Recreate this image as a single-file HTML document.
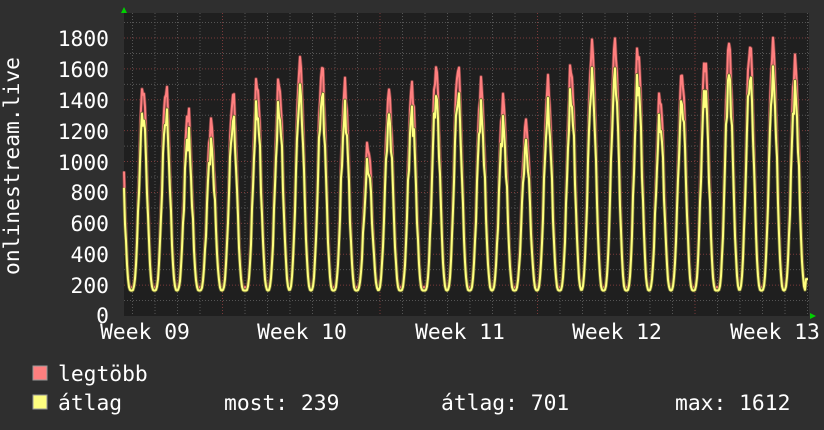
<!DOCTYPE html>
<html><head><meta charset="utf-8"><style>
html,body{margin:0;padding:0;background:#2f2f2f;width:824px;height:430px;overflow:hidden}
svg{display:block}
text{font-family:"DejaVu Sans Mono","Liberation Mono",monospace;fill:#fff;font-size:21.3px}
</style></head><body>
<svg id="s" width="824" height="430" xmlns="http://www.w3.org/2000/svg">
<rect x="0" y="0" width="824" height="430" fill="#2f2f2f"/>
<rect x="124" y="13" width="685" height="303" fill="#1f1f1f"/>
<g id="grid"></g>
<g id="data"></g>
<polygon points="121,13 127,13 124,7" fill="#00d000"/>
<polygon points="810,313 810,319 816,316" fill="#00d000"/>
<g text-anchor="end">
<text x="109" y="46">1800</text><text x="109" y="77">1600</text><text x="109" y="108">1400</text>
<text x="109" y="139">1200</text><text x="109" y="170">1000</text><text x="109" y="200">800</text>
<text x="109" y="231">600</text><text x="109" y="262">400</text><text x="109" y="293">200</text>
<text x="109" y="323">0</text>
</g>
<g text-anchor="middle">
<text x="145" y="339">Week 09</text><text x="302" y="339">Week 10</text><text x="460" y="339">Week 11</text>
<text x="617" y="339">Week 12</text><text x="775" y="339">Week 13</text>
</g>
<text transform="translate(19,166) rotate(-90)" text-anchor="middle">onlinestream.live</text>
<rect x="33" y="366" width="14" height="14" fill="#ff7f7f" stroke="#999" stroke-width="1"/>
<rect x="33" y="395" width="14" height="14" fill="#ffff80" stroke="#999" stroke-width="1"/>
<text x="58" y="381">legtöbb</text>
<text x="58" y="410">átlag</text>
<text x="224" y="410">most: 239</text>
<text x="441" y="410">átlag: 701</text>
<text x="675" y="410">max: 1612</text>
</svg>
<script>
var NS="http://www.w3.org/2000/svg";
function el(p,t,a){var e=document.createElementNS(NS,t);for(var k in a)e.setAttribute(k,a[k]);p.appendChild(e);return e}
var g=document.getElementById('grid');
function Y(v){return 316-v*278/1800}
for(var v=100;v<=1900;v+=100){var y=Y(v);if(y<13)break;
 el(g,'line',{x1:124,x2:809,y1:y,y2:y,stroke:(v%200==0)?'#7a3a3a':'#555',"stroke-width":1,"stroke-dasharray":"1,2"});}
for(var x=132.5;x<809;x+=22.5){var major=Math.abs(((x-222)%157.5+157.5)%157.5)<1;
 el(g,'line',{x1:x,x2:x,y1:13,y2:316,stroke:major?'#7a3a3a':'#555',"stroke-width":1,"stroke-dasharray":"1,2"});}
var pk=[[143,1480],[166,1470],[188,1320],[211,1240],[233,1430],[257,1510],[279,1510],[300,1640],[322,1600],[345,1480],[368,1100],[389,1440],[412,1480],[436,1600],[458,1610],[481,1490],[503,1390],[526,1240],[548,1500],[571,1600],[592,1740],[615,1760],[638,1720],[660,1420],[682,1560],[705,1650],[729,1750],[750,1750],[773,1750],[795,1640]];
var first=[[120,1450]];pk=first.concat(pk);
function val(x,avg){
 var best=pk[0],d=1e9;for(var i=0;i<pk.length;i++){var dd=Math.abs(x-pk[i][0]);if(dd<d){d=dd;best=pk[i]}}
 var t=(x-best[0])/22.4*2*Math.PI;var c=(Math.cos(t)+1)/2;c=Math.pow(c,1.6);
 var base=avg?165:185,p=avg?best[1]*0.88:best[1];
 var n=(Math.sin(x*1.7)*40+Math.sin(x*3.1)*30)*c;
 if(avg)n*=1.5;
 return base+(p-base)*c+n;
}
var d=document.getElementById('data');
[[false,'#ff7f7f'],[true,'#ffff80']].forEach(function(o){
 var pts=[];for(var x=124;x<=808;x+=1){var v=val(x,o[0]);if(x>=806)v=239;pts.push(x+','+Y(v).toFixed(1))}
 el(d,'polyline',{points:pts.join(' '),fill:'none',stroke:o[0]?'#6a6a30':'#7a3f3f',"stroke-width":3.5,"stroke-linejoin":"round"});
 el(d,'polyline',{points:pts.join(' '),fill:'none',stroke:o[1],"stroke-width":2,"stroke-linejoin":"round"});
});
</script>
</body></html>
